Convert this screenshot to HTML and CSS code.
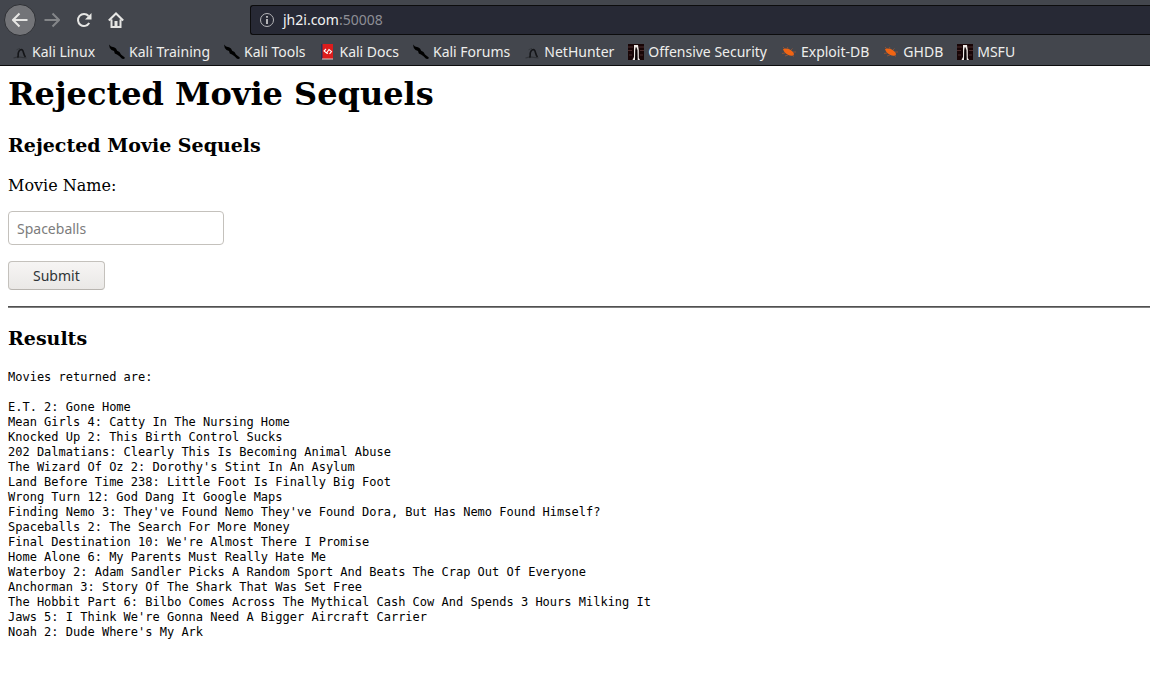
FILE: index.html
```html
<!DOCTYPE html>
<html lang="en">
<head>
<meta charset="utf-8">
<title>Rejected Movie Sequels</title>
<link rel="stylesheet" href="styles.css">
</head>
<body>
<svg class="sprite" aria-hidden="true">
  <symbol id="dragon" viewBox="0 0 16 16">
    <path d="M1.500 14 6 12.800 14.500 14" fill="none" stroke="#24262a" stroke-width="1.200" opacity=".6"/>
    <path d="M4.500 5.800 8 4.300" fill="none" stroke="#2c2e32" opacity=".6"/>
    <path d="M5.500 13.500C7 12.500 5.500 10.500 6.500 8.200 7.500 6 9 5.200 10 5.800 12 7 11 10.200 13.500 13" fill="none" stroke="#141518" stroke-width="1.600"/>
  </symbol>
  <symbol id="knife" viewBox="0 0 16 16">
    <path d="M0 .5 2 2.500 5 3.200 7 4.500 8.200 6.800 10.500 8 12 10.500 15.800 13.500 15.200 15 13 14.800 10.500 12.200 8 10.600 5.800 9.500 5 7 2.500 6 .8 4Z" fill="#000"/>
  </symbol>
  <symbol id="book" viewBox="0 0 16 16">
    <path d="M2 0h12v15H2z" fill="#dc1c1c"/>
    <path d="M2 0h1.500v15H2z" fill="#253057"/>
    <path d="M3 15h11" stroke="#d5c9c9"/>
    <path d="M7 5 5 7l2.500 2L10 5.500 12.500 7.500 10.500 10M7.500 9 9 9.500" fill="none" stroke="#fff" stroke-width="1.100"/>
  </symbol>
  <symbol id="offsec" viewBox="0 0 16 16">
    <path d="M0 0h16v16H0z" fill="#180506"/>
    <path d="M0 3h5M11 3h5M0 6.500h4M12 6.500h4M1 11h3M12 11h3" stroke="#4b2c2c" stroke-width="1.200"/>
    <path d="M6 1h4l.8 5v8l1.200 2H9.500V5.500h-2V14L7 16H4.500L6 13Z" fill="#eee9e5"/>
    <path d="M7.500 3.500h1.300l.7 12.500H7Z" fill="#090203"/>
  </symbol>
  <symbol id="bug" viewBox="0 0 16 16">
    <path d="M2 5C5 3.500 9 5 11.500 7.500 14 10 13 12 10.500 11.700 6 11.400 3 8.500 2 5Z" fill="#f06413"/>
    <path d="m4 5-2-2M7 5 6.500 3M10 6l1.500-1.500M12 8h3M4 9l-3 .5M7 11l-3 1M11 11l2 1.500" stroke="#a9582f" stroke-width=".7"/>
  </symbol>
</svg>
<header class="browser">
  <div class="toolbar">
    <div class="nav">
      <button class="nav-btn back" aria-label="Back"><svg viewBox="0 0 16 16"><path d="M15.500 8H2M7.500 1.500 1 8l6.500 6.500"/></svg></button>
      <button class="nav-btn forward" aria-label="Forward"><svg viewBox="0 0 16 16"><path d="M.5 8H14M8.500 1.500 15 8l-6.500 6.500"/></svg></button>
      <button class="nav-btn" aria-label="Reload"><svg viewBox="0 0 16 16"><path d="M13.200 11A6 6 0 1 1 12.500 4"/><path class="solid" d="M15.500 1v6.500H9Z"/></svg></button>
      <button class="nav-btn" aria-label="Home"><svg viewBox="0 0 16 16"><path d="M.8 8.500 8 1.500l7.200 7M3.500 7.500V15h9V7.500"/><path class="solid" d="M6.500 9h3v6h-3z"/></svg></button>
    </div>
    <div class="address">
      <svg class="info" viewBox="0 0 16 16"><circle cx="8" cy="8" r="6.500"/><path d="M8 7v5M8 4v1.700"/></svg>
      <span class="url">jh2i.com<span class="port">:50008</span></span>
    </div>
  </div>
  <nav class="bookmarks">
    <a href="#"><svg><use href="#dragon"/></svg>Kali Linux</a>
    <a href="#"><svg><use href="#knife"/></svg>Kali Training</a>
    <a href="#"><svg><use href="#knife"/></svg>Kali Tools</a>
    <a href="#"><svg><use href="#book"/></svg>Kali Docs</a>
    <a href="#"><svg><use href="#knife"/></svg>Kali Forums</a>
    <a href="#"><svg><use href="#dragon"/></svg>NetHunter</a>
    <a href="#"><svg><use href="#offsec"/></svg>Offensive Security</a>
    <a href="#"><svg><use href="#bug"/></svg>Exploit-DB</a>
    <a href="#"><svg><use href="#bug"/></svg>GHDB</a>
    <a href="#"><svg><use href="#offsec"/></svg>MSFU</a>
  </nav>
</header>
<main class="page">
  <h1>Rejected Movie Sequels</h1>
  <h3>Rejected Movie Sequels</h3>
  <form class="search">
    <label for="movie">Movie Name:</label>
    <input id="movie" type="text" placeholder="Spaceballs">
    <button type="submit">Submit</button>
  </form>
  <hr>
  <h3>Results</h3>
  <pre>Movies returned are:

E.T. 2: Gone Home
Mean Girls 4: Catty In The Nursing Home
Knocked Up 2: This Birth Control Sucks
202 Dalmatians: Clearly This Is Becoming Animal Abuse
The Wizard Of Oz 2: Dorothy's Stint In An Asylum
Land Before Time 238: Little Foot Is Finally Big Foot
Wrong Turn 12: God Dang It Google Maps
Finding Nemo 3: They've Found Nemo They've Found Dora, But Has Nemo Found Himself?
Spaceballs 2: The Search For More Money
Final Destination 10: We're Almost There I Promise
Home Alone 6: My Parents Must Really Hate Me
Waterboy 2: Adam Sandler Picks A Random Sport And Beats The Crap Out Of Everyone
Anchorman 3: Story Of The Shark That Was Set Free
The Hobbit Part 6: Bilbo Comes Across The Mythical Cash Cow And Spends 3 Hours Milking It
Jaws 5: I Think We're Gonna Need A Bigger Aircraft Carrier
Noah 2: Dude Where's My Ark</pre>
</main>
</body>
</html>
```
FILE: styles.css
```css
* { box-sizing: border-box; }
body {
  margin: 0;
  background: #fff;
  color: #000;
  font: 16px/19px "DejaVu Serif", serif;
}
.sprite { display: none; }

.browser {
  background: #43464d;
  border-bottom: 1px solid #0c0c0d;
  color: #eeeeec;
  font: 14px/20px "Noto Sans", sans-serif;
}
.toolbar {
  display: flex;
  align-items: center;
  height: 40px;
  padding-left: 4px;
}
.nav {
  display: flex;
  flex: none;
  width: 246px;
}
.nav-btn {
  display: flex;
  align-items: center;
  justify-content: center;
  width: 32px;
  height: 32px;
  padding: 0;
  border: 0;
  border-radius: 50%;
  background: none;
}
.nav-btn svg {
  width: 16px;
  height: 16px;
  fill: none;
  stroke: #e6e6e4;
  stroke-width: 2;
}
.nav-btn .solid { fill: #e6e6e4; stroke: none; }
.back { background: #737478; border: 1px solid #2f3136; }
.forward { opacity: .4; }
.address {
  display: flex;
  flex: 1;
  align-items: center;
  gap: 8px;
  height: 30px;
  padding-left: 8px;
  border: 1px solid #0c0c0d;
  border-right: 0;
  border-radius: 3px 0 0 3px;
  background: #272935;
}
.info {
  width: 16px;
  height: 16px;
  fill: none;
  stroke: #b5b5b8;
}
.info path { stroke-width: 2; }
.url { color: #f2f2f2; }
.port { color: #8d8e95; }
.bookmarks {
  display: flex;
  gap: 14px;
  height: 25px;
  padding: 0 12px 2px;
  white-space: nowrap;
}
.bookmarks a {
  display: flex;
  align-items: center;
  gap: 4px;
  color: inherit;
  text-decoration: none;
}
.bookmarks svg { width: 16px; height: 16px; }

.page { padding: 8px 0 8px 8px; }
h1 {
  margin: 0 0 20px;
  font-size: 32px;
  line-height: 40px;
}
h3 {
  margin: 0 0 20px;
  font-size: 19px;
  line-height: 22px;
}
.search {
  display: flex;
  flex-direction: column;
  align-items: flex-start;
  gap: 16px;
}
.search input,
.search button {
  border: 1px solid #c4c1bc;
  border-radius: 4px;
  font: 14px/20px "Noto Sans", sans-serif;
}
.search input {
  width: 216px;
  height: 34px;
  padding: 0 8px;
}
.search input::placeholder { color: #7c7c7c; }
.search button {
  padding: 4px 24px 3px;
  border-color: #c4c1bc #c4c1bc #b8b5b0;
  background: linear-gradient(#f6f5f4, #eae8e6);
  color: #2e3436;
}
hr {
  height: 2px;
  margin: 16px 0 19px;
  border: 0;
  border-top: 1px solid #505050;
  background: #808080;
}
pre {
  margin: 21px 0 0;
  font: 12px/15px "DejaVu Sans Mono", monospace;
}
```
